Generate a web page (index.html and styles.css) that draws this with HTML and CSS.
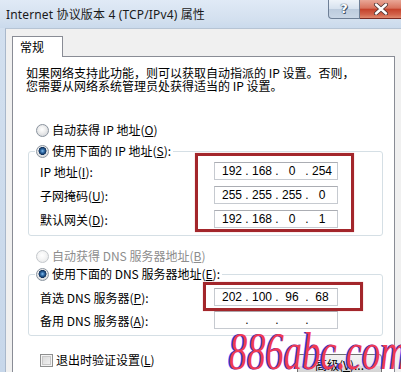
FILE: index.html
```html
<!DOCTYPE html>
<html lang="zh-CN">
<head>
<meta charset="utf-8">
<title>Internet 协议版本 4 (TCP/IPv4) 属性</title>
<link rel="stylesheet" href="styles.css">
</head>
<body>
<div class="window">
  <div class="titlebar">
    <div class="title">Internet 协议版本 4 (TCP/IPv4) 属性</div>
    <div class="caption">
      <div class="cap-help">?</div>
      <div class="cap-close">
        <svg width="16" height="12" viewBox="0 0 16 12"><path d="M3 1.5 L13 10.5 M13 1.5 L3 10.5" stroke="#4a3030" stroke-width="4" stroke-linecap="round"/><path d="M3 1.5 L13 10.5 M13 1.5 L3 10.5" stroke="#fff" stroke-width="2.4" stroke-linecap="round"/></svg>
      </div>
    </div>
  </div>
  <div class="client">
    <div class="tab">常规</div>
    <div class="panel">
      <p class="intro">如果网络支持此功能，则可以获取自动指派的 IP 设置。否则，<br>您需要从网络系统管理员处获得适当的 IP 设置。</p>

      <div class="opt"><span class="radio"></span><span>自动获得 IP 地址(<u>O</u>)</span></div>

      <div class="group g1">
        <div class="head"><span class="radio on"></span><span>使用下面的 IP 地址(<u>S</u>):</span></div>
        <div class="row"><span class="lbl">IP 地址(<u>I</u>):</span>
          <div class="ip"><span class="oct">192</span><span class="dot">.</span><span class="oct">168</span><span class="dot">.</span><span class="oct">0</span><span class="dot">.</span><span class="oct">254</span></div>
        </div>
        <div class="row"><span class="lbl">子网掩码(<u>U</u>):</span>
          <div class="ip"><span class="oct">255</span><span class="dot">.</span><span class="oct">255</span><span class="dot">.</span><span class="oct">255</span><span class="dot">.</span><span class="oct">0</span></div>
        </div>
        <div class="row"><span class="lbl">默认网关(<u>D</u>):</span>
          <div class="ip"><span class="oct">192</span><span class="dot">.</span><span class="oct">168</span><span class="dot">.</span><span class="oct">0</span><span class="dot">.</span><span class="oct">1</span></div>
        </div>
      </div>

      <div class="opt opt-dns disabled"><span class="radio"></span><span>自动获得 DNS 服务器地址(<u>B</u>)</span></div>

      <div class="group g2">
        <div class="head"><span class="radio on"></span><span>使用下面的 DNS 服务器地址(<u>E</u>):</span></div>
        <div class="row"><span class="lbl">首选 DNS 服务器(<u>P</u>):</span>
          <div class="ip"><span class="oct">202</span><span class="dot">.</span><span class="oct">100</span><span class="dot">.</span><span class="oct">96</span><span class="dot">.</span><span class="oct">68</span></div>
        </div>
        <div class="row"><span class="lbl">备用 DNS 服务器(<u>A</u>):</span>
          <div class="ip"><span class="oct"></span><span class="dot">.</span><span class="oct"></span><span class="dot">.</span><span class="oct"></span><span class="dot">.</span><span class="oct"></span></div>
        </div>
      </div>

      <div class="bottom">
        <div class="chk-item"><span class="chk"></span><span>退出时验证设置(<u>L</u>)</span></div>
        <div class="btn">高级(<u>V</u>)...</div>
      </div>
    </div>
  </div>

  <div class="mark mark1"></div>
  <div class="mark mark2"></div>
  <div class="watermark">886abc.com</div>
</div>
</body>
</html>
```
FILE: styles.css
```css
html, body {
  margin: 0;
  padding: 0;
  background: #fff;
}
.window {
  position: relative;
  width: 401px;
  height: 372px;
  overflow: hidden;
  background: linear-gradient(#d3e0ef, #c7d7ea);
  font-family: "Noto Sans CJK SC", "Noto Sans", sans-serif;
  font-size: 12px;
  color: #000;
}
.titlebar {
  height: 28px;
  display: flex;
  justify-content: space-between;
  align-items: flex-start;
  background: linear-gradient(#e0eaf6, #d3e0ef 70%, #cadaec);
}
.title {
  padding: 7px 0 0 6px;
  font-family: "Noto Sans", "Noto Sans CJK SC", sans-serif;
  font-size: 12px;
  line-height: 16px;
  letter-spacing: 0.15px;
  color: #1a1a1a;
}
.caption {
  display: flex;
  height: 19px;
}
.cap-help {
  width: 30px;
  height: 18px;
  border: 1px solid #6e7f96;
  border-top: 0;
  border-radius: 0 0 0 4px;
  background: linear-gradient(#eef3f9, #d6e1ee 50%, #bccbdd 51%, #c9d6e6);
  text-align: center;
  font-family: "DejaVu Sans", sans-serif;
  font-weight: bold;
  font-size: 13px;
  line-height: 18px;
  color: #fff;
  text-shadow: 0 0 1px #34465e, 0 0 1px #34465e, 1px 1px 0 #4a5a70;
}
.cap-close {
  width: 41px;
  height: 18px;
  border-bottom: 1px solid #7a2a22;
  background: linear-gradient(#e9a797, #d8735e 45%, #c5432c 52%, #d2624a 80%, #e08a6f);
  display: flex;
  align-items: center;
  justify-content: center;
}
.client {
  margin-left: 5px;
  border-left: 1px solid #a9b8cb;
  border-top: 1px solid #b6c4d4;
  background: #f0f0f0;
  padding: 7px 0 0 6px;
  height: 400px;
}
.tab {
  position: relative;
  z-index: 1;
  width: 51px;
  height: 21px;
  box-sizing: border-box;
  border: 1px solid #898c95;
  border-bottom: 0;
  background: #fff;
  padding-left: 7px;
  line-height: 20px;
  margin-bottom: -1px;
}
.panel {
  width: 383px;
  height: 340px;
  box-sizing: border-box;
  border: 1px solid #898c95;
  background: #fff;
}
.intro {
  margin: 9px 0 0 13px;
  line-height: 13px;
  white-space: nowrap;
}
.opt {
  margin: 30px 0 0 23px;
  height: 16px;
  display: flex;
  align-items: center;
  gap: 3px;
  line-height: 16px;
}
.opt-dns {
  margin-top: 12px;
}
.disabled {
  color: #8d8d8d;
}
.radio {
  flex: none;
  width: 13px;
  height: 13px;
  box-sizing: border-box;
  border-radius: 50%;
  border: 1px solid #8a939e;
  background: radial-gradient(circle at 45% 40%, #ffffff 0, #f0f0f0 35%, #c9cdd2 100%);
}
.radio.on {
  background:
    radial-gradient(circle at 50% 45%, #8cc4f0 0, #3c78b4 1.5px, #163e6e 3.2px, #0f2f57 3.8px, rgba(0,0,0,0) 4.2px),
    radial-gradient(circle at 45% 40%, #ffffff 0, #f0f0f0 35%, #c9cdd2 100%);
}
.disabled .radio {
  border-color: #c4c8cc;
  background: radial-gradient(circle at 45% 40%, #ffffff 0, #f6f6f6 40%, #e2e4e6 100%);
}
.group {
  margin: 13px 0 0 15px;
  width: 355px;
  box-sizing: border-box;
  border: 1px solid #d5dfe5;
  border-radius: 3px;
  padding-bottom: 7px;
}
.g2 {
  margin-top: 10px;
  padding-bottom: 6px;
}
.head {
  margin: -9px 0 0 6px;
  padding: 0 2px 0 1px;
  width: fit-content;
  height: 16px;
  line-height: 16px;
  background: #fff;
  display: flex;
  align-items: center;
  gap: 3px;
}
.row {
  display: flex;
  align-items: center;
  height: 18px;
  margin-top: 6px;
  padding-left: 11px;
}
.g1 .head + .row {
  margin-top: 3px;
}
.g2 .row {
  margin-top: 5px;
}
.g2 .head + .row {
  margin-top: 6px;
}
.lbl {
  width: 174px;
  flex: none;
  white-space: nowrap;
}
.ip {
  width: 124px;
  height: 18px;
  box-sizing: border-box;
  border: 1px solid #c6cad0;
  border-top-color: #abadb3;
  display: flex;
  align-items: center;
  padding-left: 4px;
  font-family: "Liberation Sans", Arial, sans-serif;
  font-size: 12px;
  line-height: 16px;
}
.oct {
  width: 26px;
  text-align: center;
}
.dot {
  width: 4px;
  text-align: center;
}
.bottom {
  margin: 16px 0 0 27px;
  width: 342px;
  display: flex;
  justify-content: space-between;
  align-items: flex-start;
}
.chk-item {
  display: flex;
  align-items: center;
  gap: 3px;
  height: 16px;
  line-height: 16px;
}
.chk {
  width: 13px;
  height: 13px;
  box-sizing: border-box;
  border: 1px solid #8e8f8f;
  background: linear-gradient(135deg, #d4d4d4, #f7f7f7);
  box-shadow: inset 0 0 0 1px #f4f4f4, inset 0 0 0 2px #c8c8c8;
}
.btn {
  margin-top: 2px;
  width: 85px;
  height: 23px;
  box-sizing: border-box;
  border: 1px solid #707070;
  border-radius: 3px;
  background: linear-gradient(#f2f2f2, #ebebeb 50%, #dddddd 51%, #cfcfcf);
  text-align: center;
  line-height: 20px;
}
.mark {
  position: absolute;
  border: 3px solid #a3262b;
  box-shadow: 0 0 1px rgba(200, 60, 60, 0.5);
}
.mark1 {
  left: 195px;
  top: 153px;
  width: 153px;
  height: 73px;
}
.mark2 {
  left: 203px;
  top: 282px;
  width: 154px;
  height: 23px;
}
.watermark {
  position: absolute;
  left: 229px;
  top: 325px;
  font-family: "Liberation Serif", "Times New Roman", serif;
  font-style: italic;
  font-size: 53px;
  line-height: 53px;
  white-space: nowrap;
  color: #ef3a55;
  text-shadow: -2px 0 0 #3040ee;
  transform: scaleX(0.69);
  transform-origin: 0 0;
}
```
